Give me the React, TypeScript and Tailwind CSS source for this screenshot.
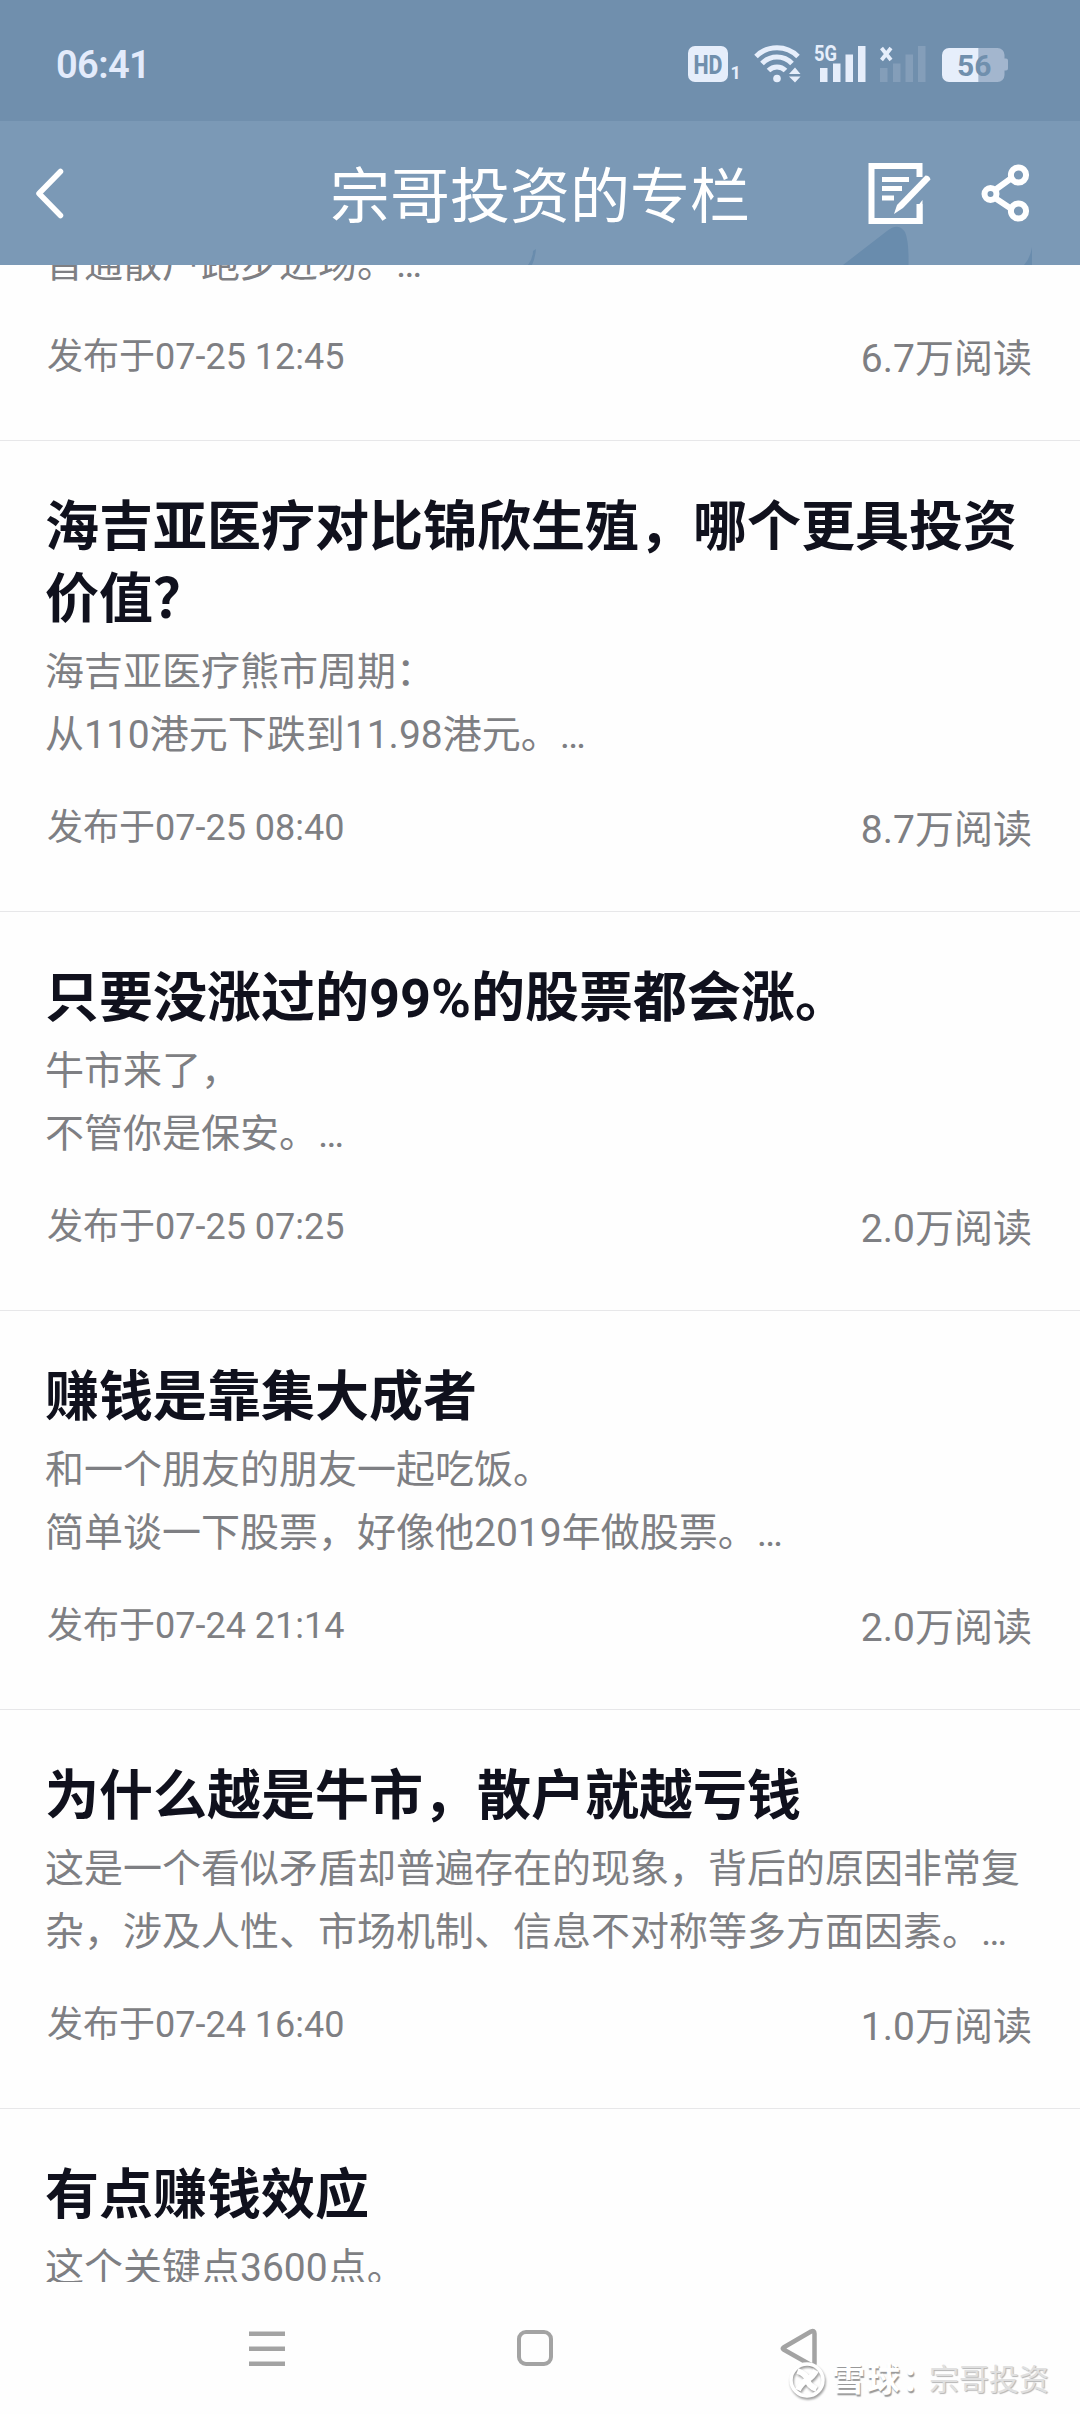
const FONT = "font-[Roboto,'Noto_Sans_CJK_SC',sans-serif]";

type Article = {
  title: string;
  lines: string[];
  date?: string;
  reads?: string;
};

const articles: Article[] = [
  {
    title: '海吉亚医疗对比锦欣生殖，哪个更具投资价值？',
    lines: ['海吉亚医疗熊市周期：', '从110港元下跌到11.98港元。…'],
    date: '07-25 08:40',
    reads: '8.7万',
  },
  {
    title: '只要没涨过的99%的股票都会涨。',
    lines: ['牛市来了，', '不管你是保安。…'],
    date: '07-25 07:25',
    reads: '2.0万',
  },
  {
    title: '赚钱是靠集大成者',
    lines: ['和一个朋友的朋友一起吃饭。', '简单谈一下股票，好像他2019年做股票。…'],
    date: '07-24 21:14',
    reads: '2.0万',
  },
  {
    title: '为什么越是牛市，散户就越亏钱',
    lines: ['这是一个看似矛盾却普遍存在的现象，背后的原因非常复', '杂，涉及人性、市场机制、信息不对称等多方面因素。…'],
    date: '07-24 16:40',
    reads: '1.0万',
  },
  { title: '有点赚钱效应', lines: ['这个关键点3600点。'] },
];

function StatusIcons() {
  const bars = [
    [0, 22, 14],
    [13, 17.5, 18.5],
    [25.5, 8.5, 27.5],
    [38, 0, 36],
  ];
  return (
    <svg width="322" height="44" viewBox="0 0 322 44" className="text-[#e6eefb]" fill="currentColor">
      <rect x="0" y="4" width="40" height="36" rx="7" />
      <text x="20" y="31.500" textAnchor="middle" textLength="29" lengthAdjust="spacingAndGlyphs" fontFamily="Roboto" fontWeight="800" fontSize="26" fill="#708fad">HD</text>
      <text x="42.500" y="37" fontFamily="Roboto" fontWeight="700" fontSize="18">1</text>
      {/* wifi */}
      <g fill="none" stroke="currentColor" strokeWidth="5">
        <path d="M68 14.500a29.500 29.500 0 0 1 42 0" />
        <path d="M74 21.500a20.500 20.500 0 0 1 30 0" />
        <path d="M80.500 28.500a12 12 0 0 1 17 0" />
      </g>
      <circle cx="89" cy="36.500" r="3.800" />
      <path d="M101 32l6-6.500 5.500 6.500zM101 34.500l6 6 5.500-6z" />
      {/* 5G signal */}
      <text x="126" y="18.500" textLength="23" lengthAdjust="spacingAndGlyphs" fontFamily="Roboto" fontWeight="700" fontSize="21.500">5G</text>
      {bars.map(([x, y, h]) => (
        <rect key={x} x={132 + x} y={4 + y} width="7.500" height={h} />
      ))}
      {/* second SIM without signal */}
      <path d="M193.500 6l9.500 12M203 6l-9.500 12" stroke="currentColor" strokeWidth="3.800" />
      <g fill="#849eb9">
        {bars.map(([x, y, h]) => (
          <rect key={x} x={192 + x} y={4 + y} width="7.500" height={h} />
        ))}
      </g>
      {/* battery */}
      <path d="M290.500 6h19a7 7 0 0 1 7 7v3.500h1.500a2 2 0 0 1 2 2v8a2 2 0 0 1-2 2h-1.500v4.500a7 7 0 0 1-7 7h-19z" fill="#a3b6ce" />
      <path d="M261 6h29.500v34h-29.500a7 7 0 0 1-7-7v-20a7 7 0 0 1 7-7z" />
      <text x="269" y="34" fontFamily="Roboto" fontWeight="700" fontSize="30" fill="#708fad">56</text>
    </svg>
  );
}

function StatusBar() {
  return (
    <div className="flex h-[121px] items-start justify-between bg-[#708fad] pl-[56px] pr-[70px]">
      <span className="mt-[45px] text-[38px] leading-[40px] font-semibold tracking-[-0.6px] text-[#e3ebfb]">06:41</span>
      <div className="mt-[42px]">
        <StatusIcons />
      </div>
    </div>
  );
}

function Header() {
  return (
    <header className="relative flex h-36 items-start bg-[#7b99b6] text-white">
      {/* faint artwork along the lower edge */}
      <svg className="absolute bottom-0 left-0" width="1080" height="40" viewBox="0 0 1080 40" fill="#698cad">
        <path d="M843 40L887 6Q898-3 905 7Q909 16 908.500 40z" />
        <path d="M1024 40Q1030 34 1032 22V40z" />
        <path d="M528 40Q533 33 533 26L536 24Q535 34 532 40z" />
      </svg>
      <svg className="ml-[34px] mt-[45px]" width="32" height="54" viewBox="0 0 32 54" fill="none" stroke="white" strokeWidth="5.500" strokeLinecap="round" strokeLinejoin="round">
        <path d="M26.500 5.500L5 27.500L26.500 49.500" />
      </svg>
      <h1 className="ml-[264px] mt-[39px] w-[420px] text-[60px] leading-[76px] font-normal whitespace-nowrap">宗哥投资的专栏</h1>
      <svg className="ml-[118px] mt-[41px]" width="64" height="64" viewBox="0 0 64 64" fill="none" stroke="white" strokeWidth="6">
        <path d="M51.500 15V4H3.500V59H51.500V42" />
        <path d="M54.500 38v24h-5.500v-17z" fill="white" stroke="none" />
        <path d="M14 17.500H41M14 26.500H34M14 36H26" strokeWidth="4.800" />
        <path d="M57.500 13.500q4 0 5 4L35 46l-9 6 3-9z" fill="white" stroke="none" />
      </svg>
      <svg className="ml-[49px] mt-[41px]" width="50" height="62" viewBox="0 0 50 62" fill="none" stroke="white" strokeWidth="6">
        <path d="M14 28L32 15M14 36L32 48" />
        <circle cx="37.500" cy="13" r="7.600" />
        <circle cx="9.500" cy="32" r="6" />
        <circle cx="37.500" cy="49" r="7.600" />
      </svg>
    </header>
  );
}

function Meta({ date, reads }: { date: string; reads: string }) {
  return (
    <div className="flex justify-between pt-[29px] pr-[2px] pl-[2px]">
      <span className="text-[36px] leading-[64px]">发布于{date}</span>
      <span className="mt-[2px] text-[39px] leading-[64px]">{reads}阅读</span>
    </div>
  );
}

function ArticleRow({ title, lines, date, reads }: Article) {
  return (
    <article className="pt-[51px] pr-[46px] pl-[45px]">
      <h2 className="text-[54px] leading-[72px] font-bold text-[#10111d]">{title}</h2>
      <div className="mt-[5px] text-[39px] leading-[63px] whitespace-nowrap">
        {lines.map((l) => (
          <p key={l}>{l}</p>
        ))}
      </div>
      {date && reads && <Meta date={date} reads={reads} />}
    </article>
  );
}

function NavBar() {
  return (
    <nav className="relative h-[132px]">
      <div className="flex h-full items-start pl-[249px] pt-[48px]">
        <svg width="36" height="36" viewBox="0 0 36 36" fill="#a3a3a3">
          <path d="M0 1.500h36v4.500H0zM0 16.500h36v4.500H0zM0 31.500h36v4.500H0z" />
        </svg>
        <span className="ml-[232px] size-9 rounded-[9px] border-4 border-[#a3a3a3]" />
        <svg className="ml-[227px] -mt-[2px]" width="38" height="42" viewBox="0 0 38 42" fill="none" stroke="#a3a3a3" strokeWidth="4.500" strokeLinejoin="round">
          <path d="M3.500 19.500L31 3.500Q34.500 2 34.500 5.500V35.500Q34.500 39 31 37L3.500 21.500Q2 20.500 3.500 19.500z" />
        </svg>
      </div>
      <div className="absolute right-[31px] top-[79px] flex items-center">
        <svg className="drop-shadow-[1px_2px_1px_#999999]" width="38" height="38" viewBox="0 0 38 38" fill="none" stroke="white">
          <circle cx="19" cy="19" r="16" strokeWidth="3.500" />
          <path d="M9.500 10q9 3 10 9t9 9M28 9.500q-3 6-9 9.500T10 29" strokeWidth="6" />
        </svg>
        <span className="ml-[6px] w-[97px] text-[33px] leading-[38px] font-bold tracking-[2px] whitespace-nowrap text-white [text-shadow:1px_2px_1px_#999999]">雪球：</span>
        <span className="text-[30px] leading-[38px] text-[#e0e0e0] [text-shadow:1px_1px_1px_#b5b5b5]">宗哥投资</span>
      </div>
    </nav>
  );
}

export default function App() {
  return (
    <div className={`${FONT} flex h-[2414px] w-[1080px] flex-col overflow-hidden bg-[#fefefe] text-[#7e7f83]`} lang="zh-CN">
      <StatusBar />
      <Header />
      <main className="h-[2017px] overflow-hidden">
        <div className="-mt-[34px]">
          <section className="h-[210px] border-b border-[#e7e7e9] pt-[1.500px] pr-[46px] pl-[45px]">
            <p className="text-[39px] leading-[63px]">普通散户跑步进场。…</p>
            <Meta date="07-25 12:45" reads="6.7万" />
          </section>
          <div className="divide-y divide-[#e7e7e9] [&>*]:h-[399px] [&>*:first-child]:h-[471px]">
            {articles.map((a) => (
              <ArticleRow key={a.title} {...a} />
            ))}
          </div>
        </div>
      </main>
      <NavBar />
    </div>
  );
}
